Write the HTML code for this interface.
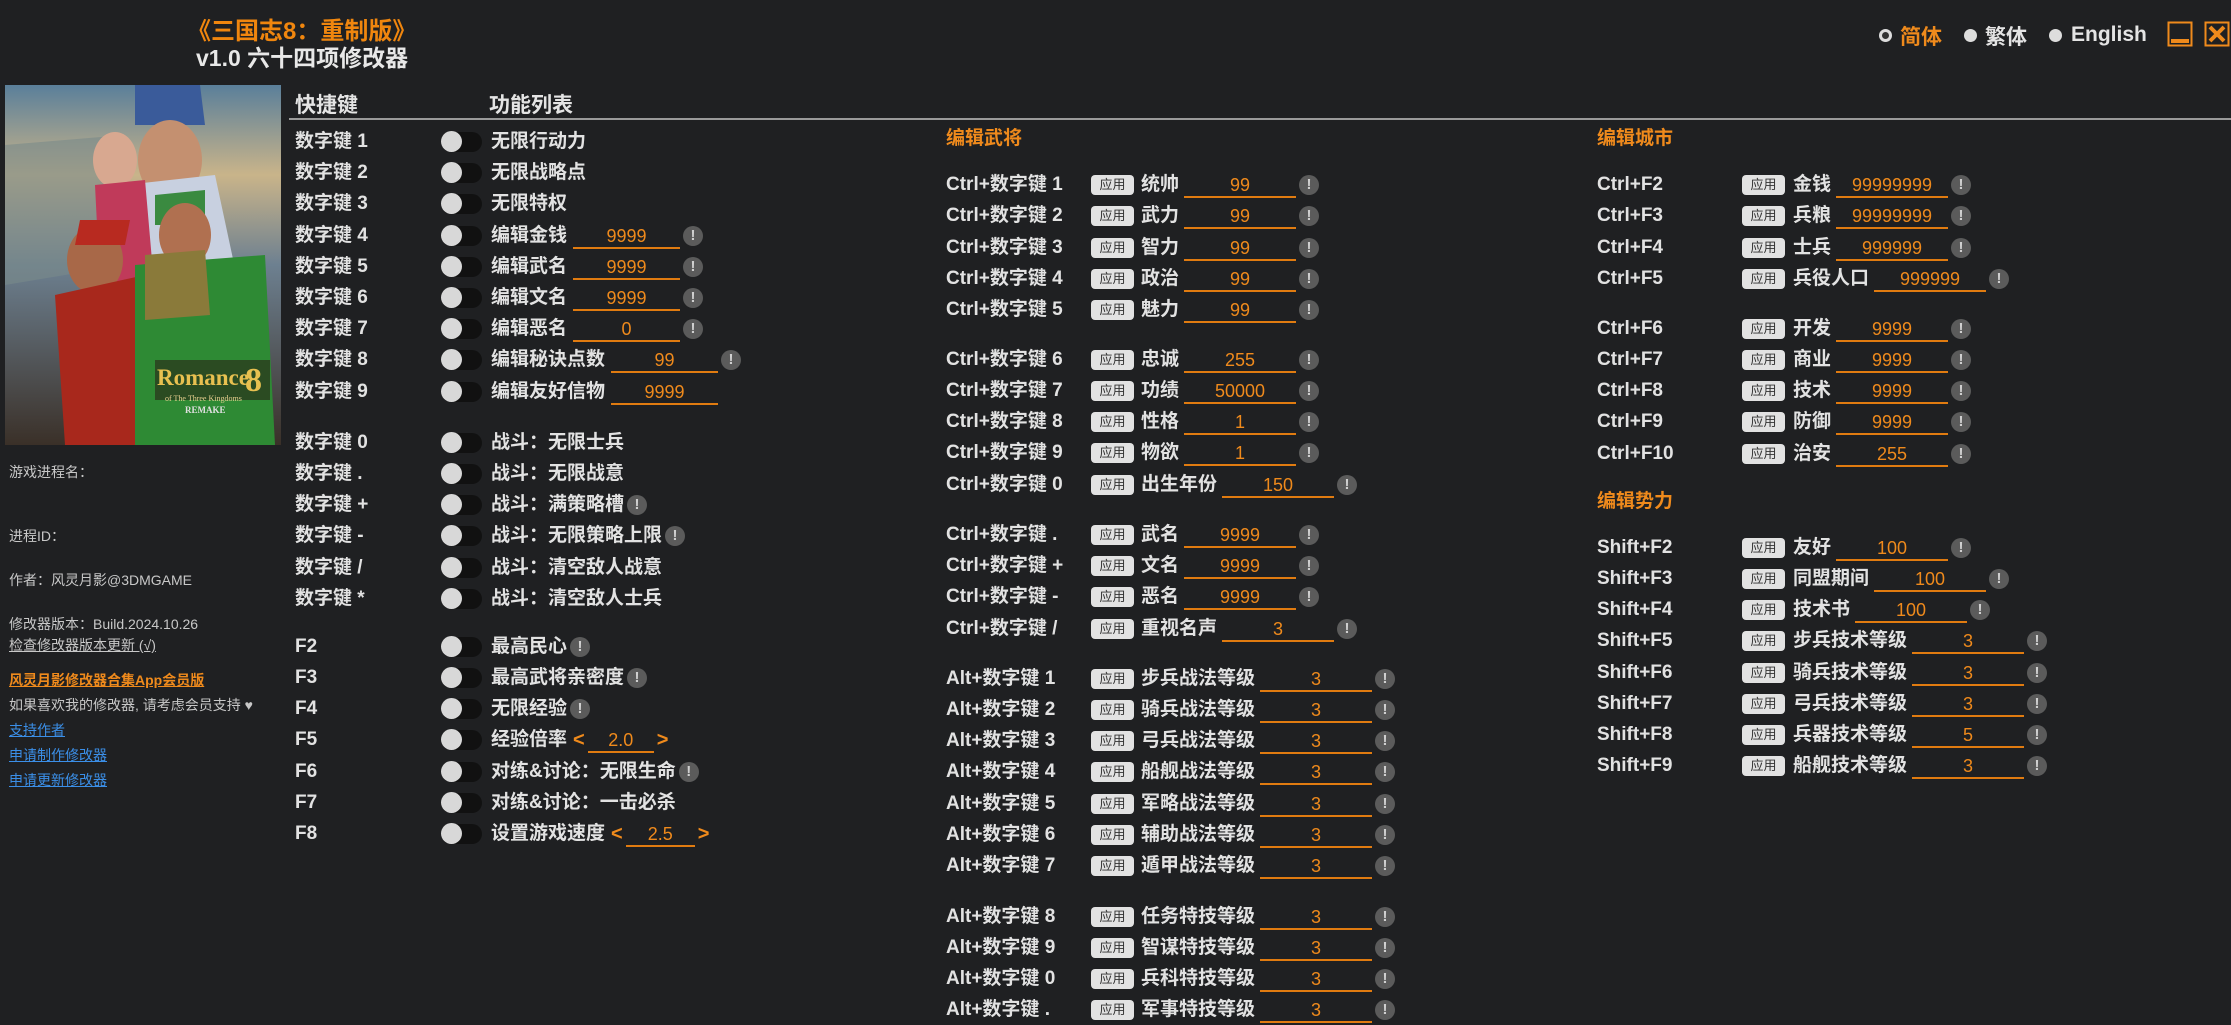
<!DOCTYPE html>
<html><head><meta charset="utf-8"><style>
*{margin:0;padding:0;box-sizing:border-box}
body{width:2231px;height:1024px;background:#1f2022;position:relative;overflow:hidden;font-family:"Liberation Sans","Noto Sans CJK SC",sans-serif;color:#e4e4e4}
.a{position:absolute;white-space:nowrap}
.r{position:absolute;height:30px;display:flex;align-items:center;white-space:nowrap;font-size:19px;font-weight:bold;color:#e2e2e2;line-height:24px}
.k1{width:146px}.k2{width:145px}
.tg{width:41px;height:20px;border-radius:10px;background:#111;position:relative;margin-right:9px;flex:none}
.tg:before{content:"";position:absolute;left:0;top:-1px;width:21px;height:21px;border-radius:50%;background:#d8d8d8}
.bt{width:43px;height:20px;border-radius:4px;background:#e2e2e2;color:#333;font-size:13px;font-weight:normal;line-height:20px;text-align:center;margin-right:7px;flex:none;font-style:normal}
.in{display:inline-block;width:112px;border-bottom:2px solid #e07b10;color:#ef8a1c;text-align:center;font-weight:normal;font-size:18px;line-height:22px;margin-left:5px;margin-top:2px}
.c1 .in{width:107px;margin-left:6px}
.ex{display:inline-block;width:20px;height:20px;border-radius:50%;background:#5b5b5b;color:#d0d0d0;font-size:15px;line-height:20px;text-align:center;margin-left:3px;flex:none}
.ar{color:#ef8a1c;font-size:20px;font-weight:bold;margin:0 3px 0 6px}
.h{position:absolute;font-size:19px;font-weight:bold;color:#ef8a1c;height:30px;line-height:30px}
.s{position:absolute;left:9px;font-size:14px;color:#c8c8c8;white-space:nowrap;line-height:20px}
</style></head><body>
<div class="a" style="left:187px;top:11px;font-size:24px;font-weight:bold;color:#f0860e">《三国志8：重制版》</div>
<div class="a" style="left:196px;top:39px;font-size:23px;font-weight:bold;color:#e8e8e8">v1.0 六十四项修改器</div>

<svg class="a" style="left:5px;top:85px" width="276" height="360" viewBox="0 0 276 360">
<defs><linearGradient id="sky" x1="0" y1="0" x2="0" y2="1"><stop offset="0" stop-color="#5a7f9a"/><stop offset=".25" stop-color="#c9b48a"/><stop offset=".5" stop-color="#6d8090"/><stop offset="1" stop-color="#3a3028"/></linearGradient></defs>
<rect width="276" height="360" fill="url(#sky)"/>
<path d="M0 60 L120 50 L120 180 L0 200Z" fill="#7a8a8a" opacity=".6"/>
<path d="M130 0 L195 0 L200 40 L130 40Z" fill="#3a5b9a"/>
<ellipse cx="165" cy="75" rx="32" ry="40" fill="#c49070"/>
<path d="M120 100 L210 90 L240 230 L110 220Z" fill="#c8d0e0"/>
<ellipse cx="110" cy="75" rx="22" ry="28" fill="#d8a890"/>
<path d="M90 100 L140 95 L150 210 L95 200Z" fill="#c03a5a"/>
<path d="M150 110 L200 105 L200 140 L150 140Z" fill="#3a8a40"/>
<ellipse cx="180" cy="150" rx="26" ry="32" fill="#b07050"/>
<ellipse cx="90" cy="175" rx="28" ry="34" fill="#a86848"/>
<path d="M75 135 L125 135 L120 160 L70 160Z" fill="#b82a20"/>
<path d="M50 210 L140 190 L150 360 L60 360Z" fill="#a8281c"/>
<path d="M130 180 L260 170 L270 360 L130 360Z" fill="#2e8a34"/>
<path d="M140 170 L200 165 L205 230 L140 235Z" fill="#8a7a3a"/>
<rect x="150" y="275" width="115" height="40" fill="#2a2218" opacity=".6"/>
<text x="152" y="300" font-family="Liberation Serif" font-weight="bold" font-size="23" fill="#e8c050">Romance</text>
<text x="240" y="306" font-family="Liberation Serif" font-weight="bold" font-size="34" fill="#e8c050">8</text>
<text x="160" y="316" font-family="Liberation Serif" font-size="8" fill="#e8d090">of The Three Kingdoms</text>
<text x="180" y="328" font-family="Liberation Serif" font-weight="bold" font-size="9" fill="#e0e0e0">REMAKE</text>
</svg>

<div class="s" style="top:462px">游戏进程名：</div>
<div class="s" style="top:526px">进程ID：</div>
<div class="s" style="top:570px">作者：风灵月影@3DMGAME</div>
<div class="s" style="top:614px">修改器版本：Build.2024.10.26</div>
<div class="s" style="top:635px;text-decoration:underline">检查修改器版本更新 (√)</div>
<div class="s" style="top:670px;color:#ef8a1c;font-weight:bold;text-decoration:underline">风灵月影修改器合集App会员版</div>
<div class="s" style="top:695px">如果喜欢我的修改器, 请考虑会员支持 ♥</div>
<div class="s" style="top:720px;color:#3b8fe8;text-decoration:underline">支持作者</div>
<div class="s" style="top:745px;color:#3b8fe8;text-decoration:underline">申请制作修改器</div>
<div class="s" style="top:770px;color:#3b8fe8;text-decoration:underline">申请更新修改器</div>

<div class="a" style="left:295px;top:89px;font-size:21px;font-weight:bold">快捷键</div>
<div class="a" style="left:489px;top:89px;font-size:21px;font-weight:bold">功能列表</div>
<div class="a" style="left:289px;top:118px;width:1942px;height:2px;background:#9a9a9a"></div>

<div class="a" style="left:1879px;top:29px;width:13px;height:13px;border-radius:50%;border:3px solid #ddd;background:#333"></div>
<div class="a" style="left:1900px;top:21px;font-size:21px;font-weight:bold;color:#ef8a1c">简体</div>
<div class="a" style="left:1964px;top:29px;width:13px;height:13px;border-radius:50%;background:#ddd"></div>
<div class="a" style="left:1985px;top:21px;font-size:21px;font-weight:bold;color:#e4e4e4">繁体</div>
<div class="a" style="left:2049px;top:29px;width:13px;height:13px;border-radius:50%;background:#ddd"></div>
<div class="a" style="left:2071px;top:23px;font-size:21px;font-weight:bold;color:#e4e4e4">English</div>
<svg class="a" style="left:2167px;top:21px" width="64" height="28"><rect x="1.5" y="1.5" width="23" height="23" fill="none" stroke="#ef8a1c" stroke-width="2"/><rect x="4" y="18" width="18" height="4" fill="#ef8a1c"/><rect x="38.5" y="1.5" width="23" height="23" fill="none" stroke="#ef8a1c" stroke-width="2"/><path d="M43 6 L57 20 M57 6 L43 20" stroke="#ef8a1c" stroke-width="4"/></svg>

<div class="c1">
<div class="r" style="left:295px;top:127px"><span class="k1">数字键 1</span><i class="tg"></i>无限行动力</div>
<div class="r" style="left:295px;top:158px"><span class="k1">数字键 2</span><i class="tg"></i>无限战略点</div>
<div class="r" style="left:295px;top:189px"><span class="k1">数字键 3</span><i class="tg"></i>无限特权</div>
<div class="r" style="left:295px;top:221px"><span class="k1">数字键 4</span><i class="tg"></i>编辑金钱<span class="in">9999</span><span class="ex">!</span></div>
<div class="r" style="left:295px;top:252px"><span class="k1">数字键 5</span><i class="tg"></i>编辑武名<span class="in">9999</span><span class="ex">!</span></div>
<div class="r" style="left:295px;top:283px"><span class="k1">数字键 6</span><i class="tg"></i>编辑文名<span class="in">9999</span><span class="ex">!</span></div>
<div class="r" style="left:295px;top:314px"><span class="k1">数字键 7</span><i class="tg"></i>编辑恶名<span class="in">0</span><span class="ex">!</span></div>
<div class="r" style="left:295px;top:345px"><span class="k1">数字键 8</span><i class="tg"></i>编辑秘诀点数<span class="in">99</span><span class="ex">!</span></div>
<div class="r" style="left:295px;top:377px"><span class="k1">数字键 9</span><i class="tg"></i>编辑友好信物<span class="in">9999</span></div>

<div class="r" style="left:295px;top:428px"><span class="k1">数字键 0</span><i class="tg"></i>战斗：无限士兵</div>
<div class="r" style="left:295px;top:459px"><span class="k1">数字键 .</span><i class="tg"></i>战斗：无限战意</div>
<div class="r" style="left:295px;top:490px"><span class="k1">数字键 +</span><i class="tg"></i>战斗：满策略槽<span class="ex">!</span></div>
<div class="r" style="left:295px;top:521px"><span class="k1">数字键 -</span><i class="tg"></i>战斗：无限策略上限<span class="ex">!</span></div>
<div class="r" style="left:295px;top:553px"><span class="k1">数字键 /</span><i class="tg"></i>战斗：清空敌人战意</div>
<div class="r" style="left:295px;top:584px"><span class="k1">数字键 *</span><i class="tg"></i>战斗：清空敌人士兵</div>

<div class="r" style="left:295px;top:632px"><span class="k1">F2</span><i class="tg"></i>最高民心<span class="ex">!</span></div>
<div class="r" style="left:295px;top:663px"><span class="k1">F3</span><i class="tg"></i>最高武将亲密度<span class="ex">!</span></div>
<div class="r" style="left:295px;top:694px"><span class="k1">F4</span><i class="tg"></i>无限经验<span class="ex">!</span></div>
<div class="r" style="left:295px;top:725px"><span class="k1">F5</span><i class="tg"></i>经验倍率<span class="ar">&lt;</span><span class="in" style="width:66px;margin-left:0">2.0</span><span class="ar" style="margin-left:3px">&gt;</span></div>
<div class="r" style="left:295px;top:757px"><span class="k1">F6</span><i class="tg"></i>对练&amp;讨论：无限生命<span class="ex">!</span></div>
<div class="r" style="left:295px;top:788px"><span class="k1">F7</span><i class="tg"></i>对练&amp;讨论：一击必杀</div>
<div class="r" style="left:295px;top:819px"><span class="k1">F8</span><i class="tg"></i>设置游戏速度<span class="ar">&lt;</span><span class="in" style="width:69px;margin-left:0">2.5</span><span class="ar" style="margin-left:3px">&gt;</span></div>
</div>

<div class="h" style="left:946px;top:124px">编辑武将</div>
<div class="r" style="left:946px;top:170px"><span class="k2">Ctrl+数字键 1</span><i class="bt">应用</i>统帅<span class="in">99</span><span class="ex">!</span></div>
<div class="r" style="left:946px;top:201px"><span class="k2">Ctrl+数字键 2</span><i class="bt">应用</i>武力<span class="in">99</span><span class="ex">!</span></div>
<div class="r" style="left:946px;top:233px"><span class="k2">Ctrl+数字键 3</span><i class="bt">应用</i>智力<span class="in">99</span><span class="ex">!</span></div>
<div class="r" style="left:946px;top:264px"><span class="k2">Ctrl+数字键 4</span><i class="bt">应用</i>政治<span class="in">99</span><span class="ex">!</span></div>
<div class="r" style="left:946px;top:295px"><span class="k2">Ctrl+数字键 5</span><i class="bt">应用</i>魅力<span class="in">99</span><span class="ex">!</span></div>

<div class="r" style="left:946px;top:345px"><span class="k2">Ctrl+数字键 6</span><i class="bt">应用</i>忠诚<span class="in">255</span><span class="ex">!</span></div>
<div class="r" style="left:946px;top:376px"><span class="k2">Ctrl+数字键 7</span><i class="bt">应用</i>功绩<span class="in">50000</span><span class="ex">!</span></div>
<div class="r" style="left:946px;top:407px"><span class="k2">Ctrl+数字键 8</span><i class="bt">应用</i>性格<span class="in">1</span><span class="ex">!</span></div>
<div class="r" style="left:946px;top:438px"><span class="k2">Ctrl+数字键 9</span><i class="bt">应用</i>物欲<span class="in">1</span><span class="ex">!</span></div>
<div class="r" style="left:946px;top:470px"><span class="k2">Ctrl+数字键 0</span><i class="bt">应用</i>出生年份<span class="in">150</span><span class="ex">!</span></div>

<div class="r" style="left:946px;top:520px"><span class="k2">Ctrl+数字键 .</span><i class="bt">应用</i>武名<span class="in">9999</span><span class="ex">!</span></div>
<div class="r" style="left:946px;top:551px"><span class="k2">Ctrl+数字键 +</span><i class="bt">应用</i>文名<span class="in">9999</span><span class="ex">!</span></div>
<div class="r" style="left:946px;top:582px"><span class="k2">Ctrl+数字键 -</span><i class="bt">应用</i>恶名<span class="in">9999</span><span class="ex">!</span></div>
<div class="r" style="left:946px;top:614px"><span class="k2">Ctrl+数字键 /</span><i class="bt">应用</i>重视名声<span class="in">3</span><span class="ex">!</span></div>

<div class="r" style="left:946px;top:664px"><span class="k2">Alt+数字键 1</span><i class="bt">应用</i>步兵战法等级<span class="in">3</span><span class="ex">!</span></div>
<div class="r" style="left:946px;top:695px"><span class="k2">Alt+数字键 2</span><i class="bt">应用</i>骑兵战法等级<span class="in">3</span><span class="ex">!</span></div>
<div class="r" style="left:946px;top:726px"><span class="k2">Alt+数字键 3</span><i class="bt">应用</i>弓兵战法等级<span class="in">3</span><span class="ex">!</span></div>
<div class="r" style="left:946px;top:757px"><span class="k2">Alt+数字键 4</span><i class="bt">应用</i>船舰战法等级<span class="in">3</span><span class="ex">!</span></div>
<div class="r" style="left:946px;top:789px"><span class="k2">Alt+数字键 5</span><i class="bt">应用</i>军略战法等级<span class="in">3</span><span class="ex">!</span></div>
<div class="r" style="left:946px;top:820px"><span class="k2">Alt+数字键 6</span><i class="bt">应用</i>辅助战法等级<span class="in">3</span><span class="ex">!</span></div>
<div class="r" style="left:946px;top:851px"><span class="k2">Alt+数字键 7</span><i class="bt">应用</i>遁甲战法等级<span class="in">3</span><span class="ex">!</span></div>

<div class="r" style="left:946px;top:902px"><span class="k2">Alt+数字键 8</span><i class="bt">应用</i>任务特技等级<span class="in">3</span><span class="ex">!</span></div>
<div class="r" style="left:946px;top:933px"><span class="k2">Alt+数字键 9</span><i class="bt">应用</i>智谋特技等级<span class="in">3</span><span class="ex">!</span></div>
<div class="r" style="left:946px;top:964px"><span class="k2">Alt+数字键 0</span><i class="bt">应用</i>兵科特技等级<span class="in">3</span><span class="ex">!</span></div>
<div class="r" style="left:946px;top:995px"><span class="k2">Alt+数字键 .</span><i class="bt">应用</i>军事特技等级<span class="in">3</span><span class="ex">!</span></div>

<div class="h" style="left:1597px;top:124px">编辑城市</div>
<div class="r" style="left:1597px;top:170px"><span class="k2">Ctrl+F2</span><i class="bt" style="margin-right:8px">应用</i>金钱<span class="in">99999999</span><span class="ex">!</span></div>
<div class="r" style="left:1597px;top:201px"><span class="k2">Ctrl+F3</span><i class="bt" style="margin-right:8px">应用</i>兵粮<span class="in">99999999</span><span class="ex">!</span></div>
<div class="r" style="left:1597px;top:233px"><span class="k2">Ctrl+F4</span><i class="bt" style="margin-right:8px">应用</i>士兵<span class="in">999999</span><span class="ex">!</span></div>
<div class="r" style="left:1597px;top:264px"><span class="k2">Ctrl+F5</span><i class="bt" style="margin-right:8px">应用</i>兵役人口<span class="in">999999</span><span class="ex">!</span></div>

<div class="r" style="left:1597px;top:314px"><span class="k2">Ctrl+F6</span><i class="bt" style="margin-right:8px">应用</i>开发<span class="in">9999</span><span class="ex">!</span></div>
<div class="r" style="left:1597px;top:345px"><span class="k2">Ctrl+F7</span><i class="bt" style="margin-right:8px">应用</i>商业<span class="in">9999</span><span class="ex">!</span></div>
<div class="r" style="left:1597px;top:376px"><span class="k2">Ctrl+F8</span><i class="bt" style="margin-right:8px">应用</i>技术<span class="in">9999</span><span class="ex">!</span></div>
<div class="r" style="left:1597px;top:407px"><span class="k2">Ctrl+F9</span><i class="bt" style="margin-right:8px">应用</i>防御<span class="in">9999</span><span class="ex">!</span></div>
<div class="r" style="left:1597px;top:439px"><span class="k2">Ctrl+F10</span><i class="bt" style="margin-right:8px">应用</i>治安<span class="in">255</span><span class="ex">!</span></div>

<div class="h" style="left:1597px;top:487px">编辑势力</div>
<div class="r" style="left:1597px;top:533px"><span class="k2">Shift+F2</span><i class="bt" style="margin-right:8px">应用</i>友好<span class="in">100</span><span class="ex">!</span></div>
<div class="r" style="left:1597px;top:564px"><span class="k2">Shift+F3</span><i class="bt" style="margin-right:8px">应用</i>同盟期间<span class="in">100</span><span class="ex">!</span></div>
<div class="r" style="left:1597px;top:595px"><span class="k2">Shift+F4</span><i class="bt" style="margin-right:8px">应用</i>技术书<span class="in">100</span><span class="ex">!</span></div>
<div class="r" style="left:1597px;top:626px"><span class="k2">Shift+F5</span><i class="bt" style="margin-right:8px">应用</i>步兵技术等级<span class="in">3</span><span class="ex">!</span></div>
<div class="r" style="left:1597px;top:658px"><span class="k2">Shift+F6</span><i class="bt" style="margin-right:8px">应用</i>骑兵技术等级<span class="in">3</span><span class="ex">!</span></div>
<div class="r" style="left:1597px;top:689px"><span class="k2">Shift+F7</span><i class="bt" style="margin-right:8px">应用</i>弓兵技术等级<span class="in">3</span><span class="ex">!</span></div>
<div class="r" style="left:1597px;top:720px"><span class="k2">Shift+F8</span><i class="bt" style="margin-right:8px">应用</i>兵器技术等级<span class="in">5</span><span class="ex">!</span></div>
<div class="r" style="left:1597px;top:751px"><span class="k2">Shift+F9</span><i class="bt" style="margin-right:8px">应用</i>船舰技术等级<span class="in">3</span><span class="ex">!</span></div>
</body></html>
